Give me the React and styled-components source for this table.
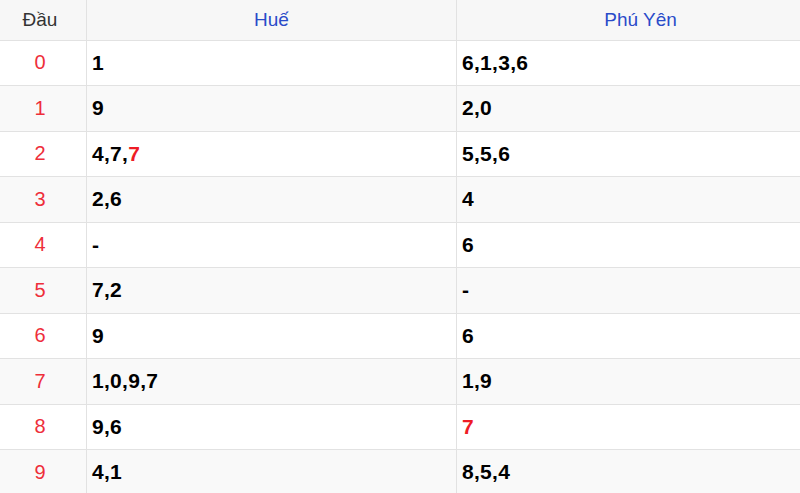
import React from "react";
import styled, { createGlobalStyle } from "styled-components";

const Global = createGlobalStyle`
  html, body { margin: 0; padding: 0; background: #fff; overflow: hidden; }
  body { font-family: "Liberation Sans", Arial, sans-serif; }
`;

const Table = styled.div`
  width: 830px;
  margin-left: -6px;
  display: grid;
  grid-template-columns: 92px 370px 1fr;
`;

const Row = styled.div`
  display: contents;
`;

const Cell = styled.div`
  box-sizing: border-box;
  height: ${(p) => (p.$head ? "40.5px" : "45.5px")};
  display: flex;
  align-items: center;
  justify-content: ${(p) => (p.$center ? "center" : "flex-start")};
  padding: 0 5px;
  background: ${(p) => (p.$head ? "#f7f7f7" : p.$stripe ? "#f9f9f9" : "#ffffff")};
  border-bottom: 1.5px solid #e2e2e2;
  border-left: ${(p) => (p.$first ? "none" : "1.5px solid #e2e2e2")};
`;

const HeadText = styled.span`
  font-size: 19px;
  color: ${(p) => (p.$blue ? "#2a4bc9" : "#333")};
`;

const Digit = styled.span`
  font-size: 20px;
  color: #ee2e3a;
`;

const Value = styled.span`
  font-size: 21px;
  font-weight: bold;
  color: #000;
  letter-spacing: 0.3px;
`;

const Hot = styled.span`
  color: #ee1c25;
`;

const data = [
  [["1"], ["6,1,3,6"]],
  [["9"], ["2,0"]],
  [["4,7,", "*7"], ["5,5,6"]],
  [["2,6"], ["4"]],
  [["-"], ["6"]],
  [["7,2"], ["-"]],
  [["9"], ["6"]],
  [["1,0,9,7"], ["1,9"]],
  [["9,6"], ["*7"]],
  [["4,1"], ["8,5,4"]],
];

function renderParts(parts) {
  return parts.map((t, i) =>
    t.startsWith("*") ? <Hot key={i}>{t.slice(1)}</Hot> : <React.Fragment key={i}>{t}</React.Fragment>
  );
}

export default function App() {
  return (
    <>
      <Global />
      <Table>
        <Row>
          <Cell $head $center $first><HeadText>Đầu</HeadText></Cell>
          <Cell $head $center><HeadText $blue>Huế</HeadText></Cell>
          <Cell $head $center><HeadText $blue>Phú Yên</HeadText></Cell>
        </Row>
        {data.map((r, i) => (
          <Row key={i}>
            <Cell $center $first $stripe={i % 2 === 1}><Digit>{i}</Digit></Cell>
            <Cell $stripe={i % 2 === 1}><Value>{renderParts(r[0])}</Value></Cell>
            <Cell $stripe={i % 2 === 1}><Value>{renderParts(r[1])}</Value></Cell>
          </Row>
        ))}
      </Table>
    </>
  );
}
